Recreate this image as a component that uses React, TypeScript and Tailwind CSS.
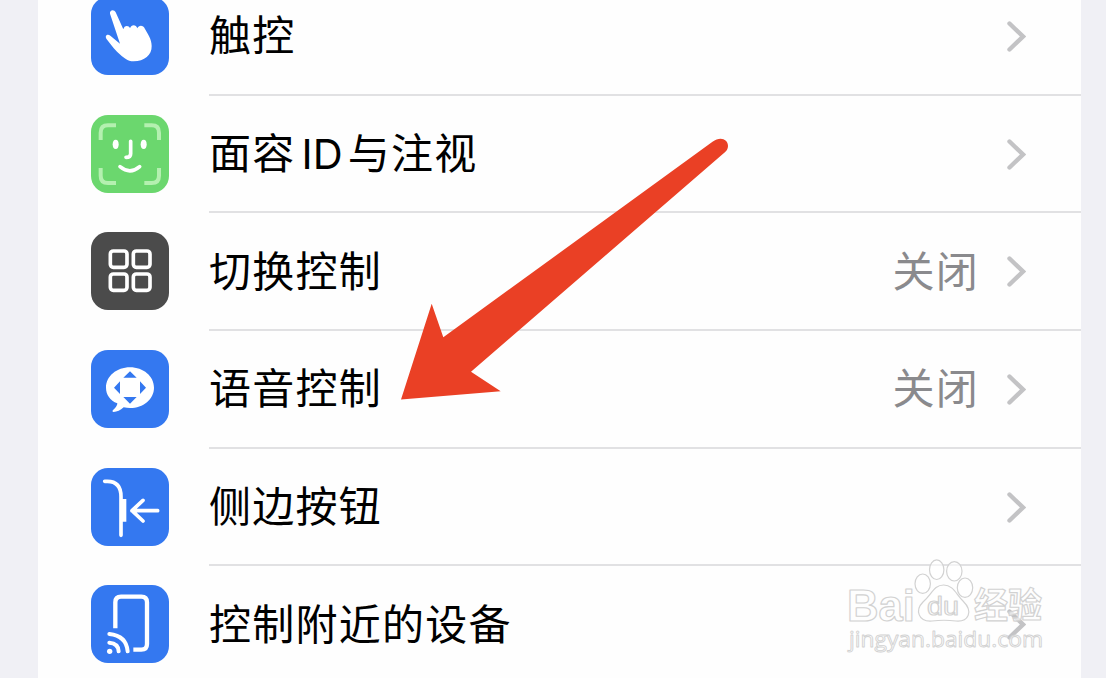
import React from 'react';

interface Setting {
  label: React.ReactNode;
  icon: React.ReactNode;
  tile: string;
  value?: string;
}

const TouchIcon = () => (
  <path
    fill="#fff"
    d="M57 50C55 38 70 36 74 46L97 97C99 84 114 84 117 94C121 82 135 82 139 94C143 83 157 83 162 96C171 112 182 127 182 147C183 174 160 193 128 193C108 192 99 182 88 173C75 163 61 145 46 125C41 116 49 110 58 116L87 140Z"
  />
);

const FaceIcon = () => (
  <g fill="none" strokeLinejoin="round">
    <path
      stroke="#b4f0b0"
      strokeWidth="12"
      d="M29 75V53Q29 31 51 31H75M160 31H182Q204 31 204 53V75M204 159V182Q204 204 182 204H160M75 204H51Q29 204 29 182V159"
    />
    <ellipse cx="74" cy="88" rx="9" ry="14" fill="#fff" />
    <ellipse cx="158" cy="88" rx="9" ry="14" fill="#fff" />
    <path stroke="#fff" strokeWidth="11" strokeLinecap="round" d="M119 79V116Q119 127 105 127M87 155Q117 180 146 155" />
  </g>
);

const SwitchIcon = () => (
  <g fill="none" stroke="#fff" strokeWidth="11">
    <rect x="58" y="57" width="50" height="49" rx="9" />
    <rect x="127" y="57" width="50" height="49" rx="9" />
    <rect x="58" y="126" width="50" height="49" rx="9" />
    <rect x="127" y="126" width="50" height="49" rx="9" />
  </g>
);

const VoiceIcon = () => (
  <>
    <path
      fill="#fff"
      d="M117 52C157 52 189 79 189 113C189 147 157 174 117 174C111 174 104 173 98 172C88 181 78 186 68 186C64 186 63 182 67 179C75 172 79 166 79 160C57 151 45 134 45 113C45 79 77 52 117 52Z"
    />
    <path fill="#3478f0" d="M117 64L137 83H97ZM69 113L87 94V132ZM165 113L147 94V132ZM97 141H137L117 161Z" />
  </>
);

const SideButtonIcon = () => (
  <g fill="none" stroke="#fff" strokeWidth="11" strokeLinecap="round" strokeLinejoin="round">
    <path d="M41 40H49Q90 40 90 86V202" />
    <path d="M200 128H123M156 97L123 128L156 159" />
    <path fill="#fff" stroke="none" d="M90 93H106V161H90Z" />
  </g>
);

const NearbyIcon = () => (
  <g fill="none" stroke="#fff" strokeWidth="12">
    <path d="M73 130V52Q73 35 90 35H151Q168 35 168 52V177Q168 194 151 194H127" strokeWidth="13" />
    <circle cx="56" cy="199" r="8" fill="#fff" stroke="none" />
    <path strokeLinecap="round" d="M55 173Q82 175 83 199M55 147Q106 152 110 199" />
  </g>
);

const settings: Setting[] = [
  { label: '触控', icon: <TouchIcon />, tile: 'bg-[#3478f0]' },
  {
    label: (
      <>
        面容
        <span className="ml-[6px] mr-[5px] font-['Inter'] text-[41.5px] leading-[0px] tracking-[0px]">ID</span>
        与注视
      </>
    ),
    icon: <FaceIcon />,
    tile: 'bg-[#6bd76e]',
  },
  { label: '切换控制', icon: <SwitchIcon />, tile: 'bg-[#4b4b4b]', value: '关闭' },
  { label: '语音控制', icon: <VoiceIcon />, tile: 'bg-[#3478f0]', value: '关闭' },
  { label: '侧边按钮', icon: <SideButtonIcon />, tile: 'bg-[#3478f0]' },
  { label: '控制附近的设备', icon: <NearbyIcon />, tile: 'bg-[#3478f0]' },
];

const SettingRow: React.FC<Setting> = ({ label, icon, tile, value }) => (
  <div className="flex h-[117.7px] shrink-0 pl-[53px]">
    <div className={`mt-[19px] size-[78px] shrink-0 overflow-hidden rounded-[17px] ${tile}`}>
      <svg viewBox="0 0 234 234" className="size-full">
        {icon}
      </svg>
    </div>
    <div className="ml-10 flex grow items-center border-b-2 border-[#e1e1e3] pr-[55px] text-[42px] leading-none tracking-[1.25px]">
      <span className="mb-[5px] grow whitespace-nowrap text-black">{label}</span>
      {value && <span className="mb-[5px] mr-[27px] text-[#8a8a8d]">{value}</span>}
      <svg viewBox="0 0 20 34" className="h-[34px] w-5 shrink-0" fill="none" stroke="#c3c3c5" strokeWidth="4.4" strokeLinecap="round">
        <path d="M3.5 4.5L17 17.5L3.5 30.5" />
      </svg>
    </div>
  </div>
);

const PointerArrow = () => (
  <svg viewBox="0 0 330 264" className="absolute left-[400px] top-[137px] h-[264px] w-[330px]">
    <path
      fill="#ea4025"
      d="M1 262.4L31.7 166.7L43.3 200.3L312.5 4.8C320 -1 328 2 328 9C328 12 326.5 14 324 16L71 234.7L100.7 254.3Z"
    />
  </svg>
);

const Watermark = () => (
  <svg
    viewBox="0 0 200 96"
    className="absolute left-[846px] top-[558px] h-24 w-[200px]"
    fill="#fff"
    fillOpacity="0.6"
    stroke="#d2d2d2"
    strokeWidth="1.2"
    strokeLinejoin="round"
  >
    <text x="1" y="62.5" textLength="68" lengthAdjust="spacingAndGlyphs" className="font-['Liberation_Sans'] text-[45px] font-bold">
      Bai
    </text>
    <ellipse cx="76.7" cy="25.7" rx="7.7" ry="9.7" />
    <ellipse cx="90.7" cy="11.7" rx="7.2" ry="9.8" />
    <ellipse cx="108.3" cy="13.3" rx="7.7" ry="9.7" />
    <ellipse cx="119" cy="29.7" rx="7.7" ry="9.7" />
    <path d="M97.7 27C107 27 110 36 117 43C128 54 122 64 110 63C102 62 94 62 86 63C72 64 69 52 77 44C86 36 88 27 97.7 27Z" />
    <text x="81" y="56.5" textLength="32" lengthAdjust="spacingAndGlyphs" className="font-['Liberation_Sans'] text-[26px]">
      du
    </text>
    <text x="128" y="60" textLength="68" lengthAdjust="spacingAndGlyphs" className="font-['Noto_Sans_CJK_SC'] text-[35px] font-bold">
      经验
    </text>
    <text x="3" y="88.5" textLength="194" lengthAdjust="spacingAndGlyphs" className="font-['Open_Sans'] text-[22px]" strokeWidth="0.9">
      jingyan.baidu.com
    </text>
  </svg>
);

export default function App() {
  return (
    <main className="relative h-[678px] w-[1106px] overflow-hidden bg-[#f0f0f5] pl-[38px] pr-[25px] font-['Noto_Sans_CJK_SC',sans-serif]">
      <section className="h-full overflow-hidden bg-[#fefefe]">
        <div className="-mt-[22px] flex flex-col">
          {settings.map((setting, i) => (
            <SettingRow key={i} {...setting} />
          ))}
        </div>
      </section>
      <PointerArrow />
      <Watermark />
    </main>
  );
}
